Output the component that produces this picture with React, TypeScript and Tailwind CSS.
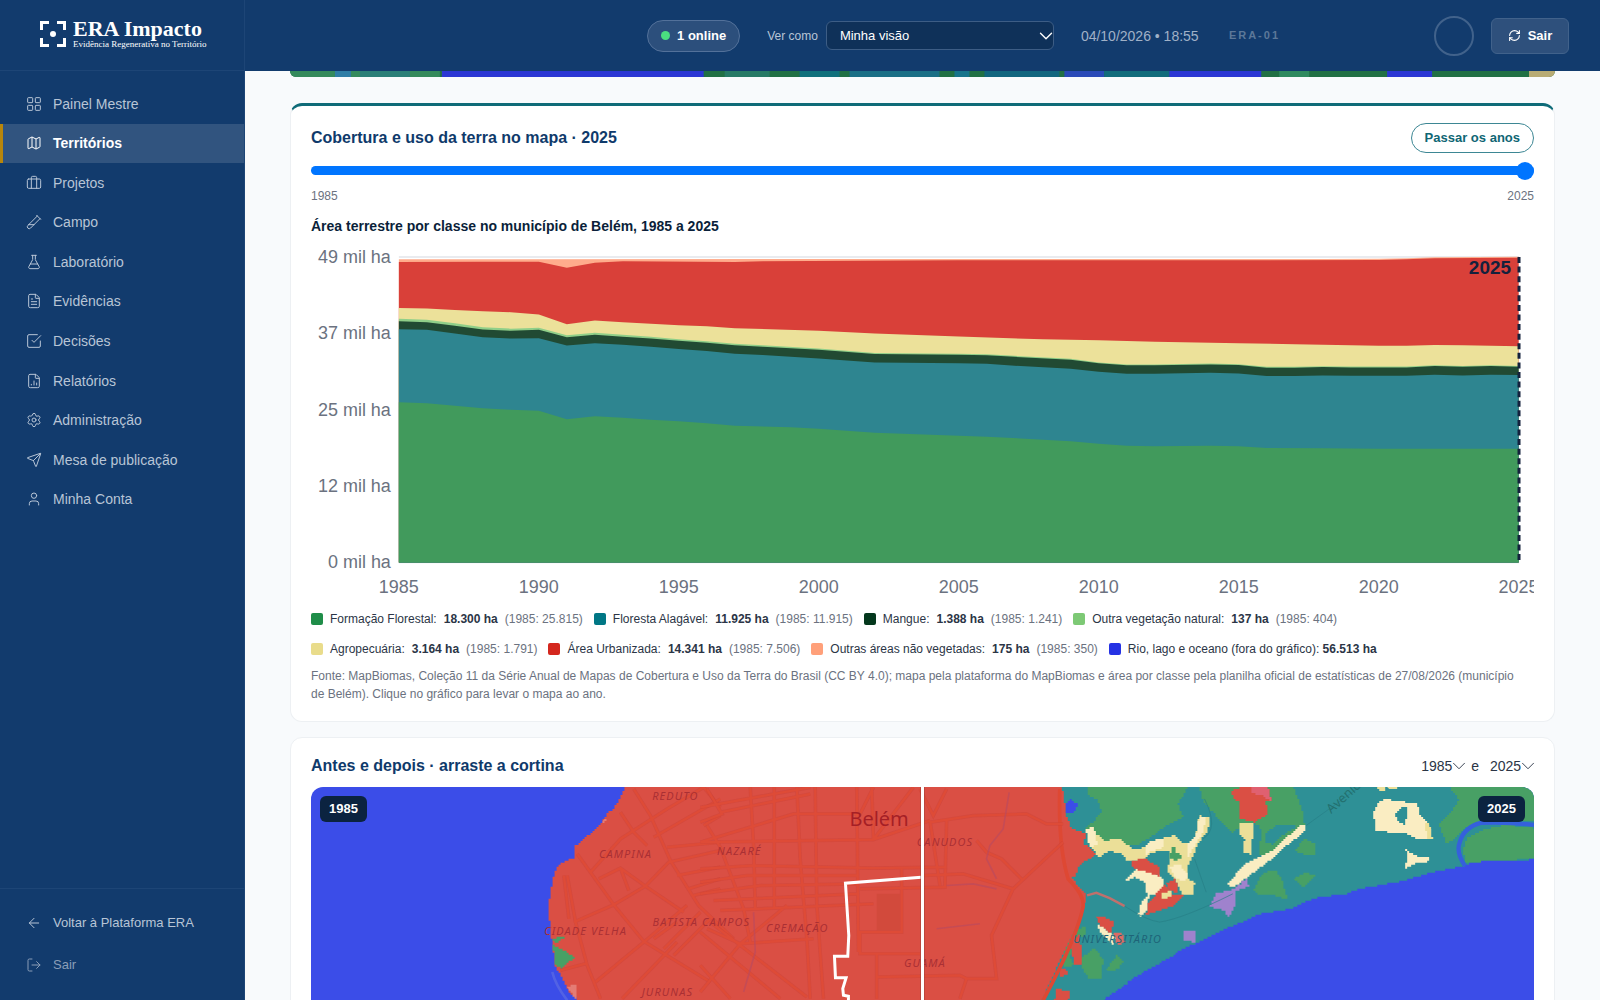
import type { ReactNode } from 'react';
import {
  ArrowLeft,
  Briefcase,
  ChevronDown,
  FileChartColumn,
  FileText,
  FlaskConical,
  LogOut,
  Map,
  RefreshCw,
  Send,
  Settings,
  TestTubeDiagonal,
  User,
} from 'lucide-react';

type Point = [number, number];

const iconProps = { size: 16, strokeWidth: 1.5 };

function GridIcon() {
  return (
    <svg width="16" height="16" viewBox="0 0 24 24" fill="none" stroke="currentColor" strokeWidth="1.5">
      <rect x="2.5" y="2.5" width="7.5" height="7.5" rx="1" />
      <rect x="14" y="2.5" width="7.5" height="7.5" rx="1" />
      <rect x="2.5" y="14" width="7.5" height="7.5" rx="1" />
      <rect x="14" y="14" width="7.5" height="7.5" rx="1" />
    </svg>
  );
}

function CheckSquareIcon() {
  return (
    <svg
      width="16"
      height="16"
      viewBox="0 0 24 24"
      fill="none"
      stroke="currentColor"
      strokeWidth="1.5"
      strokeLinecap="round"
      strokeLinejoin="round"
    >
      <path d="m9 11 3 3L22 4" />
      <path d="M21.500 12v7.500a2 2 0 0 1-2 2h-15a2 2 0 0 1-2-2v-15a2 2 0 0 1 2-2H17" />
    </svg>
  );
}

const navItems: { label: string; icon: ReactNode; active?: boolean }[] = [
  { label: 'Painel Mestre', icon: <GridIcon /> },
  { label: 'Territórios', icon: <Map {...iconProps} />, active: true },
  { label: 'Projetos', icon: <Briefcase {...iconProps} /> },
  { label: 'Campo', icon: <TestTubeDiagonal {...iconProps} /> },
  { label: 'Laboratório', icon: <FlaskConical {...iconProps} /> },
  { label: 'Evidências', icon: <FileText {...iconProps} /> },
  { label: 'Decisões', icon: <CheckSquareIcon /> },
  { label: 'Relatórios', icon: <FileChartColumn {...iconProps} /> },
  { label: 'Administração', icon: <Settings {...iconProps} /> },
  { label: 'Mesa de publicação', icon: <Send {...iconProps} /> },
  { label: 'Minha Conta', icon: <User {...iconProps} /> },
];

function Sidebar() {
  return (
    <aside className="flex w-[245px] shrink-0 flex-col border-r border-[#1d4576] bg-[#123b6d]">
      <a href="#" className="flex h-[71px] shrink-0 items-center gap-[7px] border-b border-[#1d4576] pb-0.5 pl-10 text-white">
        <svg width="26" height="26" viewBox="0 0 26 26" fill="none" stroke="currentColor" strokeWidth="3">
          <path d="M1.500 9V1.500H9M17 1.500h7.500V9M24.500 17v7.500H17M9 24.500H1.500V17" />
          <circle cx="13" cy="13" r="3" fill="currentColor" stroke="none" />
        </svg>
        <span className="flex flex-col font-['Liberation_Serif',serif]">
          <span className="text-[22px] leading-[20px] font-bold">ERA Impacto</span>
          <span className="text-[9px] leading-[10px]">Evidência Regenerativa no Território</span>
        </span>
      </a>
      <nav className="mt-[13px] grid h-[435px] shrink-0 auto-rows-fr">
        {navItems.map((item) => (
          <a
            key={item.label}
            href="#"
            className={
              item.active
                ? 'flex items-center gap-[11px] border-l-3 border-[#b8860b] bg-[#31547f] pl-[23px] text-sm font-bold text-white'
                : 'flex items-center gap-[11px] border-l-3 border-transparent pl-[23px] text-sm text-[#b8c5d6]'
            }
          >
            {item.icon}
            {item.label}
          </a>
        ))}
      </nav>
      <div className="mt-auto flex flex-col border-t border-[#1d4576] pt-[13px] pb-[14px] pl-[26px] text-[13px]">
        <a href="#" className="flex h-[42px] items-center gap-[11px] text-[#b8c5d6]">
          <ArrowLeft {...iconProps} />
          Voltar à Plataforma ERA
        </a>
        <button className="flex h-[42px] items-center gap-[11px] text-[#8a9eb8]">
          <LogOut {...iconProps} />
          Sair
        </button>
      </div>
    </aside>
  );
}

function TopBar() {
  return (
    <header className="flex h-[71px] shrink-0 items-center bg-[#123b6d] pr-[31px]">
      <div className="ml-auto flex items-center gap-[27px]">
        <div className="flex h-8 items-center gap-[7px] rounded-full border border-[#53719a] bg-[#2c4f7c] px-[13px] text-[13px] font-bold text-white">
          <span className="size-[9px] rounded-full bg-[#4ade80]" />1 online
        </div>
        <div className="flex items-center gap-2">
          <label htmlFor="view-as" className="text-xs text-[#b8c5d6]">
            Ver como
          </label>
          <div className="relative">
            <select
              id="view-as"
              className="h-[29px] w-[228px] appearance-none rounded-md border border-[#3d5d85] bg-[#0f3159] pl-[13px] text-[13px] text-white"
            >
              <option>Minha visão</option>
            </select>
            <ChevronDown
              size={22}
              strokeWidth={1.5}
              className="pointer-events-none absolute inset-y-0 -right-[3px] my-auto text-white"
            />
          </div>
        </div>
        <time className="w-[121px] text-sm text-[#a0b1c7]">04/10/2026 • 18:55</time>
        <span className="text-[11px] font-bold tracking-[2px] text-[#5c7899]">ERA-01</span>
      </div>
      <div className="ml-[154px] flex items-center gap-[17px]">
        <span className="size-10 rounded-full border-2 border-[#41628b]" />
        <button className="flex h-9 w-[78px] items-center justify-center gap-[7px] rounded-md border border-[#41628b] bg-[#2e507c] text-[13px] font-bold text-white">
          <RefreshCw size={13} strokeWidth={2} />
          Sair
        </button>
      </div>
    </header>
  );
}

// Upper edge of every stacked class, as [years since 1985, y]
const edges: Record<string, Point[]> = {
  forest: [
    [0, 162.5], [1, 163.5], [2, 166], [3, 168.5], [4, 170], [5, 171], [6, 179.5], [7, 176.5], [8, 178], [9, 180],
    [10, 181.5], [11, 183.5], [12, 186], [14, 187.5], [15, 189], [17, 193], [21, 197], [24, 201.5], [25, 204],
    [26, 206], [27, 206.5], [29, 206], [30, 206.7], [31, 208.3], [33, 208.5], [35, 209], [40, 209],
  ],
  flooded: [
    [0, 89.3], [1, 90], [2, 93.7], [3, 97.3], [4, 98.7], [5, 98.3], [6, 105.7], [7, 103.3], [8, 105], [9, 107],
    [10, 109.3], [11, 111.3], [12, 114], [13, 115.2], [15, 118.7], [17, 122.8], [20, 123.5], [21, 124], [22, 126],
    [24, 129], [25, 132], [26, 134], [27, 134], [29, 133], [30, 133.7], [31, 136.3], [32, 136.3], [33, 135.7],
    [34, 136], [36, 136], [37, 135], [38, 135.7], [39, 135], [40, 135.3],
  ],
  mangrove: [
    [0, 81.3], [1, 82.3], [2, 86], [3, 89.7], [4, 91], [5, 90], [6, 97.3], [7, 95], [8, 97], [9, 98.7],
    [10, 101], [11, 103], [12, 105.3], [13, 107], [15, 110], [17, 114.3], [20, 115], [21, 115.5], [22, 117],
    [24, 120], [25, 123.5], [26, 125.5], [27, 125.5], [29, 124.7], [30, 125.3], [31, 128], [32, 128], [33, 127.3],
    [34, 127.7], [36, 127.7], [37, 126.3], [38, 127], [39, 126.3], [40, 127],
  ],
  natural: [
    [0, 78.8], [1, 79.8], [2, 83.5], [3, 87.4], [4, 88.8], [5, 88], [6, 95.3], [7, 93], [8, 95], [9, 96.8],
    [10, 99.4], [11, 101.4], [12, 103.8], [13, 105.5], [15, 108.6], [17, 113.1], [20, 114], [21, 114.5], [22, 116],
    [24, 119], [25, 122.6], [26, 124.6], [27, 124.6], [29, 123.8], [30, 124.4], [31, 127], [32, 127], [33, 126.4],
    [34, 126.8], [36, 126.8], [37, 125.4], [38, 126.1], [39, 125.4], [40, 126.2],
  ],
  farming: [
    [0, 68], [1, 68.7], [2, 70], [3, 71.3], [4, 72.3], [5, 74.7], [6, 84.3], [7, 80.7], [8, 82.3], [9, 84],
    [10, 85.3], [11, 86.3], [12, 88.3], [15, 91], [17, 93.7], [20, 96.7], [23, 99.5], [25, 100.3], [27, 102],
    [30, 103.5], [32, 104.3], [35, 106], [36, 106], [37, 105.2], [38, 105.3], [40, 106.5],
  ],
  urban: [
    [0, 22], [3, 21.7], [5, 21.7], [6, 27.7], [7, 22.7], [8, 21.3], [12, 22], [13, 21.3], [20, 20.2], [30, 20.3],
    [35, 20], [36, 19.3], [37, 18.3], [40, 17.7],
  ],
  bare: [[0, 19.3], [20, 19], [33, 19], [35, 18.7], [36, 18.3], [37, 17.3], [40, 16.8]],
};

// Painted from the tallest stack down, so each class covers the one above it
const layers = [
  { edge: 'bare', fill: '#ffac8c' },
  { edge: 'urban', fill: '#d94039' },
  { edge: 'farming', fill: '#ece19a' },
  { edge: 'natural', fill: '#90cf89' },
  { edge: 'mangrove', fill: '#214a33' },
  { edge: 'flooded', fill: '#2e8590' },
  { edge: 'forest', fill: '#419a5c' },
];

const PLOT_LEFT = 88;
const PLOT_BOTTOM = 323;
const YEAR_STEP = 28.04;

function areaPoints(edge: Point[]) {
  return [...edge, [40, PLOT_BOTTOM], [0, PLOT_BOTTOM]]
    .map(([year, y]) => `${PLOT_LEFT + year * YEAR_STEP},${y}`)
    .join(' ');
}

function AreaChart() {
  const yTicks = [
    { label: '49 mil ha', y: 17 },
    { label: '37 mil ha', y: 93 },
    { label: '25 mil ha', y: 170 },
    { label: '12 mil ha', y: 246 },
    { label: '0 mil ha', y: 323 },
  ];
  const years = [1985, 1990, 1995, 2000, 2005, 2010, 2015, 2020, 2025];

  return (
    <svg viewBox="0 0 1225 360" className="block h-auto w-full overflow-hidden" role="img" aria-label="Área por classe">
      {yTicks.map((tick) => (
        <g key={tick.label}>
          <line x1={PLOT_LEFT} x2="1210" y1={tick.y} y2={tick.y} stroke="#e2e5ea" strokeWidth="1.500" />
          <text x="80" y={tick.y + 6} textAnchor="end" fontSize="18" fill="#6b7280">
            {tick.label}
          </text>
        </g>
      ))}
      {layers.map((layer) => (
        <polygon key={layer.edge} points={areaPoints(edges[layer.edge])} fill={layer.fill} />
      ))}
      <line x1="1210" x2="1210" y1="17" y2="323" stroke="#14213d" strokeWidth="3" strokeDasharray="6 3.600" />
      <text x="1202" y="34" textAnchor="end" fontSize="19" fontWeight="700" fill="#14213d">
        2025
      </text>
      {years.map((year) => (
        <text
          key={year}
          x={PLOT_LEFT + (year - 1985) * YEAR_STEP}
          y="354"
          textAnchor="middle"
          fontSize="18"
          fill="#6b7280"
        >
          {year}
        </text>
      ))}
    </svg>
  );
}

const legend = [
  { name: 'Formação Florestal:', value: '18.300 ha', before: '(1985: 25.815)', swatch: 'bg-[#1f8d49]' },
  { name: 'Floresta Alagável:', value: '11.925 ha', before: '(1985: 11.915)', swatch: 'bg-[#007785]' },
  { name: 'Mangue:', value: '1.388 ha', before: '(1985: 1.241)', swatch: 'bg-[#04381d]' },
  { name: 'Outra vegetação natural:', value: '137 ha', before: '(1985: 404)', swatch: 'bg-[#7dc975]' },
  { name: 'Agropecuária:', value: '3.164 ha', before: '(1985: 1.791)', swatch: 'bg-[#e9dc8b]' },
  { name: 'Área Urbanizada:', value: '14.341 ha', before: '(1985: 7.506)', swatch: 'bg-[#d4271e]' },
  { name: 'Outras áreas não vegetadas:', value: '175 ha', before: '(1985: 350)', swatch: 'bg-[#ffa07a]' },
];

function CoverageCard() {
  return (
    <section className="rounded-xl border border-t-3 border-[#edf0f3] border-t-[#0f6b78] bg-white px-5 pt-[17px] pb-[18px]">
      <div className="flex items-center justify-between">
        <h2 className="text-base font-bold text-[#0f3a6b]">Cobertura e uso da terra no mapa · 2025</h2>
        <button className="h-[30px] rounded-full border border-[#3d8794] px-[13px] text-[13px] font-bold text-[#0f6674]">
          Passar os anos
        </button>
      </div>
      <input
        type="range"
        min={1985}
        max={2025}
        defaultValue={2025}
        aria-label="Ano do mapa"
        className="mt-[13px] block h-[9px] w-full appearance-none rounded-full bg-[#0075ff] [&::-webkit-slider-thumb]:size-[18px] [&::-webkit-slider-thumb]:appearance-none [&::-webkit-slider-thumb]:rounded-full [&::-webkit-slider-thumb]:bg-[#0075ff]"
      />
      <div className="mt-[13px] flex justify-between text-xs text-[#6b7280]">
        <span>1985</span>
        <span>2025</span>
      </div>
      <h3 className="mt-3 text-sm font-bold text-[#0b1f3a]">Área terrestre por classe no município de Belém, 1985 a 2025</h3>
      <div className="mt-1">
        <AreaChart />
      </div>
      <ul className="mt-[5px] flex flex-wrap gap-x-[11px] text-xs leading-[30px] text-[#2b3546]">
        {legend.map((item) => (
          <li key={item.name} className="flex items-center gap-[7px]">
            <span className={`size-3 rounded-xs ${item.swatch}`} />
            <span>{item.name}</span>
            <strong>{item.value}</strong>
            <span className="text-[#6b7280]">{item.before}</span>
          </li>
        ))}
        <li className="flex items-center gap-[7px]">
          <span className="size-3 rounded-xs bg-[#2532e4]" />
          <span>
            Rio, lago e oceano (fora do gráfico): <strong>56.513 ha</strong>
          </span>
        </li>
      </ul>
      <p className="mt-[3px] text-xs leading-[18px] text-[#6b7280]">
        Fonte: MapBiomas, Coleção 11 da Série Anual de Mapas de Cobertura e Uso da Terra do Brasil (CC BY 4.0); mapa pela
        plataforma do MapBiomas e área por classe pela planilha oficial de estatísticas de 27/08/2026 (município
        de&nbsp;Belém). Clique no gráfico para levar o mapa ao ano.
      </p>
    </section>
  );
}

// Turns an outline into the staircase edge of a classified raster
function steps(outline: string, cell = 6) {
  const corners = outline.split(' ').map((pair) => pair.split(',').map(Number) as Point);
  let path = '';
  corners.forEach(([x, y], i) => {
    const [nextX, nextY] = corners[(i + 1) % corners.length];
    const count = Math.max(1, Math.ceil(Math.max(Math.abs(nextX - x), Math.abs(nextY - y)) / cell));
    for (let k = 0; k < count; k++) {
      const px = Math.round((x + ((nextX - x) * k) / count) / cell) * cell;
      const py = Math.round((y + ((nextY - y) * k) / count) / cell) * cell;
      path += path ? `H${px}V${py}` : `M${px} ${py}`;
    }
  });
  return `${path}Z`;
}

const WATER = '#3b4de8';
const URBAN = '#da4f44';
const FOREST = '#48a065';
const FLOODED = '#2e9096';
const CREAM = '#faedc2';
const FARM = '#ebdf98';
const MINING = '#9f82cd';

const cover1985 = [
  {
    fill: URBAN,
    outline:
      '978,20 960,60 940,88 915,115 895,145 860,175 820,205 820,238 790,250 770,265 758,300 748,345 745,400 750,470 755,500 765,570 785,600 805,640 830,665 900,800 1870,800 1870,20',
  },
  { fill: '#e47c74', outline: '912,118 916,124 896,144 890,142' },
  { fill: '#e47c74', outline: '800,622 826,618 830,660 818,650' },
  { fill: FOREST, outline: '753,478 795,474 765,494' },
  { fill: FOREST, outline: '757,500 780,510 820,538 785,568 765,555' },
];

const cover2025 = [
  {
    fill: FOREST,
    outline: '85,20 390,20 355,80 370,115 330,135 290,165 240,195 200,205 130,185 100,150 75,145 100,125 125,95 115,60 85,45',
  },
  { fill: FOREST, outline: '420,20 700,20 730,100 735,140 640,225 600,225 605,150 590,130 545,145 520,160 470,110 430,60' },
  { fill: FLOODED, outline: '615,165 650,140 700,135 715,145 680,165 640,195 620,190' },
  { fill: FOREST, outline: '705,215 730,180 770,195 770,225 740,225' },
  { fill: FOREST, outline: '580,335 610,280 650,275 670,310 683,362 650,350 600,345' },
  { fill: FOREST, outline: '700,300 735,280 768,292 740,325' },
  { fill: FOREST, outline: '60,540 100,505 130,545 125,600 90,600 70,570' },
  { fill: FOREST, outline: '140,570 170,530 190,550 180,570 145,580' },
  { fill: FOREST, outline: '40,450 80,445 75,470 50,480 30,540 45,560 10,565 5,540' },
  { fill: FOREST, outline: '1170,20 1425,20 1425,125 1270,125 1215,150 1165,200 1140,130 1175,95 1200,60' },
  { fill: FOREST, outline: '1222,252 1212,210 1225,175 1270,150 1340,138 1425,148 1425,240' },
  {
    fill: WATER,
    outline:
      '135,660 190,620 240,585 310,545 380,505 440,480 490,450 560,425 600,405 690,390 760,358 860,345 900,330 1020,308 1120,280 1210,262 1240,250 1425,242 1425,1300 -200,1300',
  },
  {
    fill: URBAN,
    outline:
      '-440,20 6,20 15,75 20,115 35,150 80,165 70,195 105,230 60,260 50,290 35,300 75,345 75,370 60,420 40,470 10,530 -50,660 -200,1300 -440,1300',
  },
  { fill: WATER, outline: '18,70 30,62 60,80 40,100 20,105' },
  { fill: URBAN, outline: '518,35 545,24 625,24 635,65 620,70 625,110 585,130 540,118 540,65 520,60' },
  { fill: '#e06070', outline: '575,24 625,24 635,65 612,50 580,40' },
  { fill: CREAM, outline: '500,318 555,255 640,210 725,135 745,152 690,195 640,240 530,325' },
  { fill: FARM, outline: '540,130 580,130 578,225 552,222 555,180 540,160' },
  { fill: CREAM, outline: '975,60 1045,70 1075,75 1080,110 1105,130 1120,180 1075,180 1050,165 950,155 942,100 955,70' },
  { fill: FARM, outline: '1098,130 1108,130 1120,180 1104,180' },
  { fill: FLOODED, outline: '1010,100 1024,86 1045,82 1045,112 1035,136 1012,122' },
  { fill: CREAM, outline: '1040,208 1060,230 1112,235 1105,252 1070,255 1035,275 1035,255 1045,240' },
  { fill: FARM, outline: '955,22 980,22 975,38 960,38' },
  { fill: FARM, outline: '985,22 1012,22 1010,32 990,32' },
  {
    fill: FARM,
    outline:
      '80,150 98,145 108,165 130,185 180,180 215,210 260,205 270,185 300,180 340,168 365,190 395,195 410,160 418,110 450,115 450,135 440,165 415,200 400,235 385,265 385,300 405,315 400,345 370,345 345,300 325,275 330,215 300,215 270,225 250,250 200,245 190,225 150,215 120,235 95,205 85,185',
  },
  { fill: CREAM, outline: '80,150 98,145 108,165 112,195 95,205 85,185' },
  { fill: CREAM, outline: '255,205 270,185 310,180 310,205 280,215 262,225' },
  { fill: CREAM, outline: '418,112 440,112 430,160 405,205 385,240 385,190 410,160' },
  { fill: CREAM, outline: '330,262 360,258 385,290 380,305 350,300' },
  { fill: FOREST, outline: '335,205 350,205 350,220 368,228 366,238 350,250 342,238 330,236' },
  {
    fill: CREAM,
    outline: '190,305 225,270 260,265 300,295 310,300 310,350 270,345 262,395 245,415 235,405 240,375 262,350 258,310 230,295 200,312',
  },
  { fill: URBAN, outline: '215,245 250,240 300,265 300,292 270,282 220,266' },
  { fill: URBAN, outline: '290,340 315,310 335,350 385,345 350,380 260,410 265,370' },
  { fill: URBAN, outline: '318,312 340,300 355,315 355,342 330,335' },
  { fill: FARM, outline: '300,345 330,335 340,350 310,362' },
  { fill: MINING, outline: '450,375 465,345 510,335 560,300 568,325 525,340 525,385 510,420 495,395 455,385' },
  { fill: MINING, outline: '370,458 405,458 405,490 375,485' },
  { fill: URBAN, outline: '108,415 125,412 160,430 158,462 130,450' },
  { fill: '#dd6b64', outline: '160,462 185,462 195,490 175,500' },
  { fill: CREAM, outline: '112,438 165,478 162,495 120,455' },
  { fill: URBAN, outline: '30,490 60,460 68,560 45,560' },
  { fill: URBAN, outline: '0,570 30,575 20,590 0,592' },
  { fill: URBAN, outline: '-10,630 30,640 25,680 -20,680' },
];

// Avenues of the old centre and of the grid around it
const westRoads =
  'M1000 30 1050 110 1110 245 1195 380 1300 480M960 100 1000 160 1040 200M830 225 940 378 1030 488 1230 610M820 430 940 378 1035 322 1105 250 1260 215M1060 175 1260 60M870 280 960 180 1100 90 1210 25M895 300 960 268 1035 322 1150 400M960 268 985 335M790 290 805 420M800 290 825 430 860 560 900 660M885 610 1030 490 1160 380M965 660 1130 490M780 575 855 555M1210 25 1260 85M1100 205 1260 190M1130 290 1260 265M1165 330 1260 300M1180 350 1260 330M1060 480 1130 430M1090 510 1200 400M1120 530 1230 420M1210 140 1260 110';
const gridRoads =
  'M20 30 65 105 0 130M0 190 280 105 480 105 520 25M0 85 330 25M20 140 60 205 130 390 150 490M60 100 330 45M222 25V390M150 25 160 200 165 390M290 25 300 240 320 480 330 660M345 25 350 380 370 660M470 25 475 520M515 25 520 180M0 190 520 182 690 125M520 182 640 25M0 270 160 260 520 268 740 265M0 310 140 290 470 290M0 345 180 320 470 315M40 365 470 345M60 395 520 375M20 450 120 495 340 480M605 270V460H480V525H660M530 595 780 590 800 600 890 600 875 470 940 330M690 125 720 320M740 125 735 325M690 130 820 110 980 105 1040 135 1090 135M660 30 700 110 740 30M670 290 790 285 940 330 1090 190M830 185 860 220 905 240 970 305M480 330 740 325M0 640 120 495 260 380M0 460 240 660M30 430 320 655M0 560 90 660M530 525V660M780 660 800 600';

const labels = [
  { name: 'REDUTO', x: 365, y: 9 },
  { name: 'CAMPINA', x: 315, y: 67 },
  { name: 'NAZARÉ', x: 429, y: 64 },
  { name: 'CANUDOS', x: 635, y: 55 },
  { name: 'CIDADE VELHA', x: 275, y: 144 },
  { name: 'BATISTA CAMPOS', x: 391, y: 135 },
  { name: 'CREMAÇÃO', x: 487, y: 141 },
  { name: 'GUAMÁ', x: 615, y: 176 },
  { name: 'JURUNAS', x: 357, y: 205 },
];

function CompareMap() {
  return (
    <svg viewBox="0 0 1225 420" className="block h-auto w-full" role="img" aria-label="Mapa comparativo de Belém">
      <rect width="1225" height="420" fill={WATER} />
      <g transform="translate(-10 -8) scale(0.3333)">
        <path d="M755 580Q765 620 800 665" fill="none" stroke="#5262e4" strokeWidth="8" />
        {cover1985.map((patch) => (
          <path key={patch.outline} d={steps(patch.outline)} fill={patch.fill} />
        ))}
        <path d={westRoads} fill="none" stroke="#c94138" strokeWidth="11" opacity="0.400" />
        <path d={westRoads} fill="none" stroke="#de4b37" strokeWidth="7" />
      </g>
      <g transform="translate(750 -8) scale(0.3333)">
        <rect x="-415" y="0" width="1850" height="1300" fill={FLOODED} />
        {cover2025.map((patch) => (
          <path key={patch.outline} d={steps(patch.outline)} fill={patch.fill} />
        ))}
        <path
          d="M1218 262Q1190 220 1202 190Q1215 145 1265 132Q1340 128 1425 138"
          fill="none"
          stroke="#3560dc"
          strokeWidth="13"
        />
        <path d="M82 350 110 342 150 358 195 382" fill="none" stroke="#c0706c" strokeWidth="7" />
        <path
          d="M195 382Q260 425 300 430Q370 420 520 345M740 140 900 25M435 60Q480 150 430 180M405 240 440 340"
          fill="none"
          stroke="#277f86"
          strokeWidth="2"
        />
        <path
          d="M0 30Q-5 200 25 300Q75 350 70 385Q50 480-50 665"
          fill="none"
          stroke="#de4833"
          strokeWidth="11"
        />
      </g>
      <g transform="translate(390 -8) scale(0.3333)">
        <path d={gridRoads} fill="none" stroke="#c94138" strokeWidth="11" opacity="0.400" />
        <path d={gridRoads} fill="none" stroke="#de4b37" strokeWidth="7" />
        <path d="M530 345h70v112h-70z" fill="#d24a3c" />
        <path
          d="M928 40 910 150 870 200 860 240 890 300M740 320 820 315 890 330M160 400 165 520 130 640M710 450 840 435"
          fill="none"
          stroke="#b84a60"
          strokeWidth="5"
          opacity="0.600"
        />
        <path
          d="M664 295 436 313 446 470 443 533H403L406 597H438L428 630 430 650 445 653V700"
          fill="none"
          stroke="#fff"
          strokeWidth="9"
        />
      </g>
      <g className="font-['Noto_Sans',sans-serif] tracking-widest italic" fontSize="11" fill="#aa3034" textAnchor="middle">
        {labels.map((label) => (
          <text key={label.name} x={label.x} y={label.y + 4}>
            {label.name}
          </text>
        ))}
        <text x="808" y="156" fill="#1e6478">
          UNIVERSITÁRIO
        </text>
      </g>
      <g className="font-['Noto_Sans',sans-serif]">
        <text x="569" y="39" fontSize="20" fill="#a51f26" textAnchor="middle">
          Belém
        </text>
        <text x="1022" y="27" fontSize="13" fill="#23706f" transform="rotate(-42 1022 27)">
          Avenida
        </text>
      </g>
      <rect x="610" width="5" height="420" fill="#8f3a35" opacity="0.400" />
      <rect x="611" width="3" height="420" fill="#fff" />
    </svg>
  );
}

function YearSelect({ id, label, year }: { id: string; label: string; year: string }) {
  return (
    <div className="relative">
      <select id={id} aria-label={label} className="block w-[44px] appearance-none text-sm">
        <option>{year}</option>
      </select>
      <ChevronDown size={22} strokeWidth={1} className="pointer-events-none absolute inset-y-0 -right-[5px] my-auto" />
    </div>
  );
}

function CompareCard() {
  return (
    <section className="rounded-xl border border-[#edf0f3] bg-white px-5 pt-4 pb-5">
      <div className="flex items-center justify-between">
        <h2 className="text-base font-bold text-[#0f3a6b]">Antes e depois · arraste a cortina</h2>
        <div className="flex items-center text-sm text-[#2b3546]">
          <YearSelect id="year-before" label="Ano inicial" year="1985" />
          <span className="pr-[11px] pl-[6px]">e</span>
          <YearSelect id="year-after" label="Ano final" year="2025" />
        </div>
      </div>
      <div className="relative mt-[9px] overflow-hidden rounded-xl">
        <CompareMap />
        <span className="absolute top-[9px] left-[9px] rounded-md bg-[#0b2340] px-[9px] py-[3px] text-[13px] leading-5 font-bold text-white">
          1985
        </span>
        <span className="absolute top-[9px] right-[9px] rounded-md bg-[#0b2340] px-[9px] py-[3px] text-[13px] leading-5 font-bold text-white">
          2025
        </span>
      </div>
    </section>
  );
}

function MapStrip() {
  const patches = [
    { x: 45, w: 16, fill: '#2f7da6' },
    { x: 70, w: 50, fill: '#2b7f78' },
    { x: 152, w: 262, fill: '#2b36d4' },
    { x: 435, w: 45, fill: '#277a66' },
    { x: 510, w: 40, fill: '#10707c' },
    { x: 560, w: 90, fill: '#1a6f86' },
    { x: 665, w: 15, fill: '#17748c' },
    { x: 695, w: 75, fill: '#12667f' },
    { x: 775, w: 40, fill: '#2a4ab8' },
    { x: 815, w: 65, fill: '#126c7c' },
    { x: 880, w: 92, fill: '#2b36d4' },
    { x: 990, w: 30, fill: '#2f8a5f' },
    { x: 1098, w: 45, fill: '#2b36d4' },
    { x: 1240, w: 26, fill: '#b8ab74' },
  ];
  return (
    <div className="h-1.5 shrink-0 overflow-hidden rounded-b-xl bg-[#217044]">
      <svg viewBox="0 0 1266 6" preserveAspectRatio="none" className="block h-full w-full">
        <rect width="150" height="6" fill="#358a5c" />
        {patches.map((patch) => (
          <rect key={patch.x} x={patch.x} width={patch.w} height="6" fill={patch.fill} />
        ))}
      </svg>
    </div>
  );
}

export default function App() {
  return (
    <div className="flex h-screen overflow-hidden bg-[#f8fafc] font-['Liberation_Sans',Arial,sans-serif]">
      <Sidebar />
      <div className="flex min-w-0 flex-1 flex-col">
        <TopBar />
        <main className="flex min-h-0 flex-1 flex-col overflow-y-auto px-[45px] [scrollbar-width:none]">
          <MapStrip />
          <div className="mt-[26px] flex flex-col gap-[15px]">
            <CoverageCard />
            <CompareCard />
          </div>
        </main>
      </div>
    </div>
  );
}
